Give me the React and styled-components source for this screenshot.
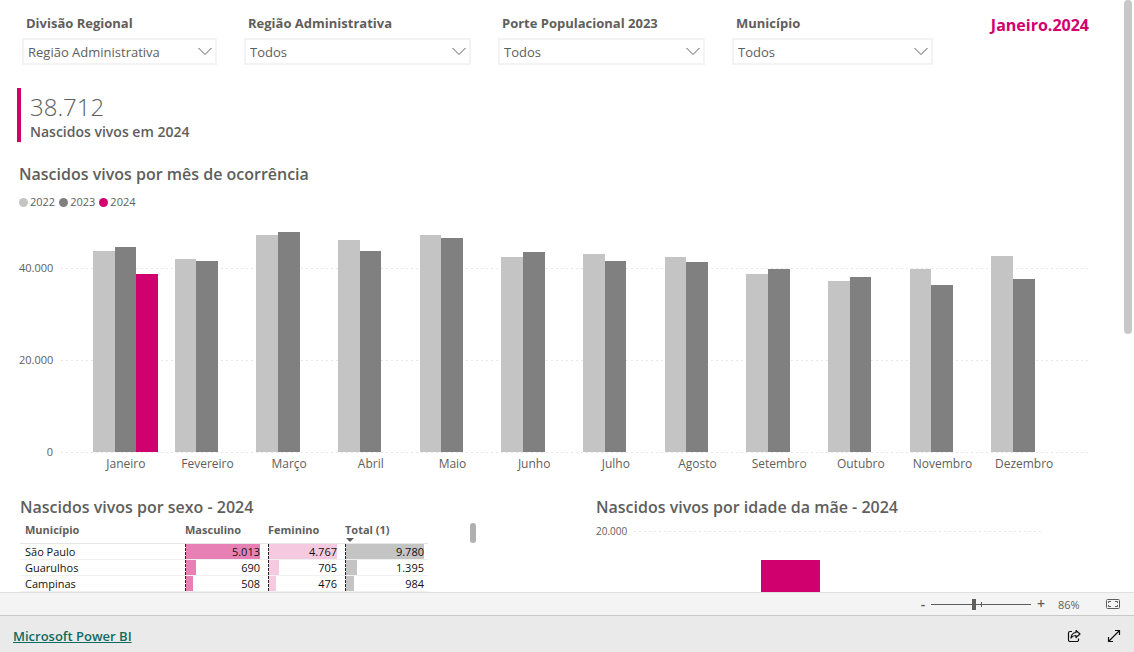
import React, { useState } from 'react';
import styled, { createGlobalStyle } from 'styled-components';

const GlobalStyle = createGlobalStyle`
  * { box-sizing: border-box; }
  body {
    margin: 0;
    background: #fff;
    color: #605e5c;
    font-family: 'Open Sans', 'Liberation Sans', sans-serif;
    font-size: 12px;
  }
  button, select, input { font: inherit; color: inherit; margin: 0; }
`;

const Page = styled.div`
  display: flex;
  flex-direction: column;
  height: 100vh;
`;

const Viewport = styled.div`
  flex: 1;
  min-height: 0;
  display: flex;
  overflow: hidden;
`;

const Report = styled.main`
  flex: 1;
  min-width: 0;
  padding: 13px 35px 0 17px;
`;

const ScrollTrack = styled.div`
  flex: none;
  width: 10px;
`;

const ScrollThumb = styled.div`
  width: 8px;
  height: 334px;
  border-radius: 4px;
  background: #c8c8c8;
`;

const Filters = styled.div`
  display: grid;
  grid-template-columns: 195fr 227fr 207fr 201fr 129fr;
  column-gap: 27px;
  padding-left: 5px;
`;

const Filter = styled.div`
  position: relative;
  min-width: 0;
`;

const FilterLabel = styled.label`
  display: block;
  height: 25px;
  padding-left: 4px;
  line-height: 20px;
  font-size: 13px;
  font-weight: 700;
  white-space: nowrap;
`;

const Select = styled.select`
  display: block;
  width: 100%;
  height: 27px;
  padding: 0 24px 0 4px;
  border: 2px solid #f3f3f3;
  border-radius: 0;
  appearance: none;
  background: #fff;
  font-size: 13px;
`;

const Chevron = styled.svg`
  position: absolute;
  right: 5px;
  bottom: 9px;
  width: 14px;
  height: 9px;
  pointer-events: none;
`;

const Period = styled.div`
  text-align: right;
  font-size: 16px;
  line-height: 24px;
  font-weight: 700;
  color: #d0006f;
`;

const Kpi = styled.div`
  height: 54px;
  margin-top: 23px;
  padding-left: 9px;
  border-left: 4px solid #d0006f;
`;

const KpiValue = styled.div`
  height: 34px;
  font-size: 24px;
  line-height: 38px;
  font-weight: 300;
`;

const KpiLabel = styled.div`
  font-size: 14px;
  line-height: 20px;
  font-weight: 600;
`;

const Title = styled.h2`
  margin: 0;
  font-size: 16px;
  line-height: 22px;
  font-weight: 600;
  white-space: nowrap;
`;

const MonthPanel = styled.section`
  margin-top: 21px;
  padding-left: 2px;
`;

const Legend = styled.div`
  display: flex;
  align-items: flex-start;
  gap: 4px;
  height: 37px;
  padding-top: 9px;
  font-size: 11px;
  line-height: 16px;
`;

const LegendItem = styled.span`
  display: flex;
  align-items: center;
  gap: 2px;
`;

const Dot = styled.i`
  width: 9px;
  height: 9px;
  border-radius: 50%;
  background: ${(p) => p.$color};
`;

const Chart = styled.div`
  display: grid;
  grid-template-columns: 34px 1fr;
  column-gap: 8px;
`;

const Axis = styled.div`
  display: flex;
  flex-direction: column;
  justify-content: space-between;
  height: 200px;
  margin: 38px 0 -7px;
  font-size: 11px;
  line-height: 16px;
  text-align: right;
`;

const dots = 'repeating-linear-gradient(90deg, #e8e8e8 0 2px, transparent 2px 5px)';

const Plot = styled.div`
  height: 231px;
  padding: 0 24px;
  display: grid;
  grid-template-columns: repeat(12, 1fr);
  background:
    ${dots} 0 46px / 100% 1px no-repeat,
    ${dots} 0 138px / 100% 1px no-repeat,
    ${dots} 0 230px / 100% 1px no-repeat;
`;

const Group = styled.div`
  display: grid;
  grid-template-columns: repeat(3, 1fr);
  align-items: end;
  height: 230px;
  padding: 0 11% 0 10%;
`;

const Bar = styled.div`
  background: ${(p) => p.$color};
`;

const Months = styled.div`
  grid-column: 2;
  display: grid;
  grid-template-columns: repeat(12, 1fr);
  padding: 2px 24px 0;
  line-height: 18px;
  text-align: center;
`;

const Lower = styled.div`
  display: grid;
  grid-template-columns: 576fr 493fr;
  margin-top: 23px;
  padding-left: 3px;
`;

const SexBody = styled.div`
  display: flex;
  gap: 42px;
`;

const Table = styled.table`
  width: 408px;
  table-layout: fixed;
  border-collapse: collapse;
  color: #111;
  font-size: 11px;
`;

const HeadCell = styled.th`
  position: relative;
  width: ${(p) => p.$width};
  height: 25px;
  padding: 4px 0 0 ${(p) => (p.$first ? '5px' : '0')};
  border-bottom: 1px solid #e6e6e6;
  color: #605e5c;
  font-weight: 700;
  line-height: 16px;
  text-align: left;
  vertical-align: top;
  white-space: nowrap;
`;

const SortMark = styled.span`
  position: absolute;
  left: 1px;
  bottom: 1px;
  border: 4px solid transparent;
  border-top-color: #605e5c;
  border-bottom: 0;
`;

const Cell = styled.td`
  height: 16px;
  padding: 0 ${(p) => p.$right || '0'} 0 ${(p) => (p.$first ? '5px' : '0')};
  border-bottom: 1px solid #f0f0f0;
  line-height: 15px;
`;

const DataCell = styled.div`
  position: relative;
  height: 15px;
  border-left: 1px dashed #252423;
  text-align: right;
`;

const DataBar = styled.div`
  position: absolute;
  inset: 0 auto 0 0;
  background: ${(p) => p.$color};
`;

const DataValue = styled.span`
  position: relative;
`;

const TableThumb = styled.div`
  width: 6px;
  height: 20px;
  margin-top: 5px;
  border-radius: 3px;
  background: #b0b0b0;
`;

const AgeChart = styled.div`
  display: grid;
  grid-template-columns: 30px 1fr;
  column-gap: 8px;
  margin-top: 2px;
  padding-right: 48px;
  font-size: 10px;
  line-height: 22px;
`;

const AgePlot = styled.div`
  display: grid;
  grid-template-columns: 127fr 59fr 221fr;
  height: 120px;
  padding-top: 40px;
  background: ${dots} 0 11px / 100% 1px no-repeat;
`;

const AgeBar = styled.div`
  grid-column: 2;
  background: #d0006f;
`;

const ZoomBar = styled.div`
  flex: none;
  display: flex;
  align-items: center;
  justify-content: flex-end;
  height: 23px;
  padding-right: 14px;
  border-top: 1px solid #e0e0e0;
  background: #f4f4f4;
`;

const IconButton = styled.button`
  display: flex;
  align-items: center;
  justify-content: center;
  width: ${(p) => p.$width || '16px'};
  height: 20px;
  padding: 0;
  border: 0;
  background: none;
  font-size: 14px;
  font-weight: 600;
  line-height: 20px;
`;

const Slider = styled.input`
  appearance: none;
  width: 100px;
  height: 12px;
  margin: 0 2px;
  background:
    linear-gradient(#605e5c, #605e5c) 50px 4px / 1px 5px no-repeat,
    linear-gradient(#605e5c, #605e5c) 0 6px / 100% 1px no-repeat;
  &::-webkit-slider-thumb {
    appearance: none;
    width: 4px;
    height: 11px;
    background: #605e5c;
  }
`;

const Percent = styled.output`
  width: 57px;
  padding-left: 9px;
  font-size: 11px;
`;

const Footer = styled.footer`
  flex: none;
  display: flex;
  align-items: center;
  gap: 24px;
  height: 37px;
  padding: 4px 12px 0 13px;
  border-top: 1px solid #c8c8c8;
  background: #eaeaea;
  color: #111;
`;

const BrandLink = styled.a`
  margin-right: auto;
  color: #0f6b5f;
  font-size: 13px;
  font-weight: 600;
  line-height: 20px;
`;

const GREY = '#c4c4c4';
const DARK = '#808080';
const PINK = '#d0006f';
const AXIS_MAX = 50000;

const filters = [
  ['Divisão Regional', 'Região Administrativa'],
  ['Região Administrativa', 'Todos'],
  ['Porte Populacional 2023', 'Todos'],
  ['Município', 'Todos'],
];

const legend = [['2022', GREY], ['2023', DARK], ['2024', PINK]];

const months = [
  ['Janeiro', 43600, 44500, 38712],
  ['Fevereiro', 42000, 41500],
  ['Março', 47150, 47800],
  ['Abril', 46080, 43700],
  ['Maio', 47150, 46600],
  ['Junho', 42500, 43470],
  ['Julho', 43150, 41500],
  ['Agosto', 42300, 41200],
  ['Setembro', 38600, 39700],
  ['Outubro', 37170, 38150],
  ['Novembro', 39700, 36300],
  ['Dezembro', 42600, 37600],
];

const columns = [
  { color: '#e781b5', right: '8px' },
  { color: '#f5cae0', right: '8px' },
  { color: '#c4c4c4', right: '4px' },
];

const rows = [
  { city: 'São Paulo', cells: [['5.013', 100], ['4.767', 100], ['9.780', 100]] },
  { city: 'Guarulhos', cells: [['690', 14], ['705', 15], ['1.395', 14]] },
  { city: 'Campinas', cells: [['508', 10], ['476', 10], ['984', 10]] },
];

function FilterBox({ id, label, value }) {
  return (
    <Filter>
      <FilterLabel htmlFor={id}>{label}</FilterLabel>
      <Select id={id} defaultValue={value}>
        <option>{value}</option>
      </Select>
      <Chevron viewBox="0 0 14 9" fill="none" stroke="#605e5c">
        <path d="M0.5 1 L7 7.5 L13.5 1" />
      </Chevron>
    </Filter>
  );
}

export default function App() {
  const [zoom, setZoom] = useState(86);
  return (
    <Page>
      <GlobalStyle />
      <Viewport>
        <Report>
          <Filters>
            {filters.map(([label, value], i) => (
              <FilterBox key={label} id={`filter-${i}`} label={label} value={value} />
            ))}
            <Period>Janeiro.2024</Period>
          </Filters>

          <Kpi>
            <KpiValue>38.712</KpiValue>
            <KpiLabel>Nascidos vivos em 2024</KpiLabel>
          </Kpi>

          <MonthPanel>
            <Title>Nascidos vivos por mês de ocorrência</Title>
            <Legend>
              {legend.map(([year, color]) => (
                <LegendItem key={year}><Dot $color={color} />{year}</LegendItem>
              ))}
            </Legend>
            <Chart>
              <Axis><span>40.000</span><span>20.000</span><span>0</span></Axis>
              <Plot>
                {months.map(([name, ...values]) => (
                  <Group key={name}>
                    {values.map((v, i) => (
                      <Bar key={i} $color={legend[i][1]} style={{ height: `${(v / AXIS_MAX) * 230}px` }} />
                    ))}
                  </Group>
                ))}
              </Plot>
              <Months>{months.map(([name]) => <span key={name}>{name}</span>)}</Months>
            </Chart>
          </MonthPanel>

          <Lower>
            <section>
              <Title>Nascidos vivos por sexo - 2024</Title>
              <SexBody>
                <Table>
                  <thead>
                    <tr>
                      <HeadCell $first $width="165px">Município</HeadCell>
                      <HeadCell $width="83px">Masculino</HeadCell>
                      <HeadCell $width="77px">Feminino</HeadCell>
                      <HeadCell $width="83px">Total (1)<SortMark /></HeadCell>
                    </tr>
                  </thead>
                  <tbody>
                    {rows.map(({ city, cells }) => (
                      <tr key={city}>
                        <Cell $first>{city}</Cell>
                        {cells.map(([text, share], i) => (
                          <Cell key={i} $right={columns[i].right}>
                            <DataCell>
                              <DataBar $color={columns[i].color} style={{ width: `${share}%` }} />
                              <DataValue>{text}</DataValue>
                            </DataCell>
                          </Cell>
                        ))}
                      </tr>
                    ))}
                  </tbody>
                </Table>
                <TableThumb />
              </SexBody>
            </section>
            <section>
              <Title>Nascidos vivos por idade da mãe - 2024</Title>
              <AgeChart>
                <span>20.000</span>
                <AgePlot><AgeBar /></AgePlot>
              </AgeChart>
            </section>
          </Lower>
        </Report>
        <ScrollTrack><ScrollThumb /></ScrollTrack>
      </Viewport>

      <ZoomBar>
        <IconButton $width="12px" aria-label="Reduzir">-</IconButton>
        <Slider
          type="range"
          aria-label="Zoom"
          min="0"
          max="200"
          value={zoom}
          onChange={(e) => setZoom(Number(e.target.value))}
        />
        <IconButton aria-label="Ampliar">+</IconButton>
        <Percent>{zoom}%</Percent>
        <IconButton $width="14px" aria-label="Ajustar à página">
          <svg width="14" height="10" viewBox="0 0 14 10" fill="none" stroke="#605e5c">
            <rect x="0.5" y="0.5" width="13" height="9" rx="1" />
            <path d="M5 2.5H2.5V4M2.5 6V7.5H5M9 2.5H11.5V4M11.5 6V7.5H9" />
          </svg>
        </IconButton>
      </ZoomBar>

      <Footer>
        <BrandLink href="#powerbi">Microsoft Power BI</BrandLink>
        <IconButton aria-label="Compartilhar">
          <svg width="14" height="14" viewBox="0 0 14 14" fill="none" stroke="currentColor" strokeWidth="1.2" strokeLinejoin="round">
            <path d="M5 2.5H3A1.5 1.5 0 0 0 1.5 4V11A1.5 1.5 0 0 0 3 12.5H10A1.5 1.5 0 0 0 11.5 11V9.5" />
            <path d="M9 1.5L13 5L9 8.5V6.5C6.5 6.5 5 7.5 4 9C4.3 6 6 3.7 9 3.5Z" />
          </svg>
        </IconButton>
        <IconButton aria-label="Tela cheia">
          <svg width="14" height="14" viewBox="0 0 14 14" fill="none" stroke="currentColor" strokeWidth="1.2">
            <path d="M1.5 12.5L12.5 1.5M8 1.5H12.5V6M1.5 8V12.5H6" />
          </svg>
        </IconButton>
      </Footer>
    </Page>
  );
}
